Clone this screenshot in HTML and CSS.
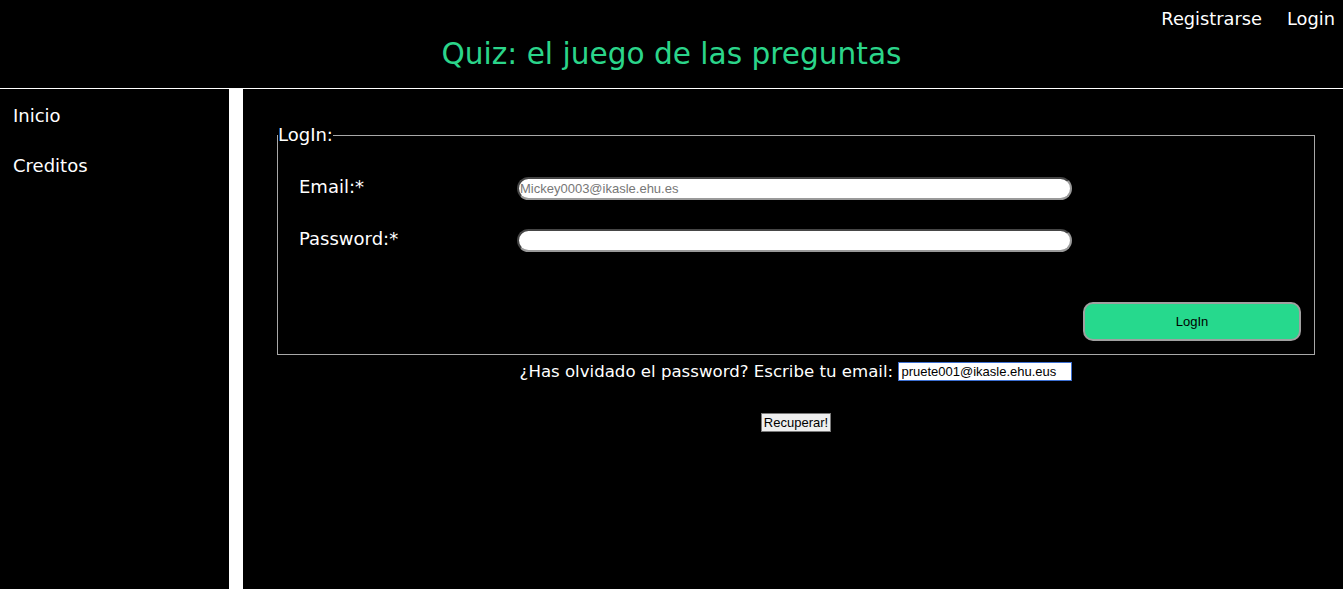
FILE: index.html
```html
<!DOCTYPE html>
<html lang="es">
<head>
<meta charset="utf-8">
<title>Quiz</title>
<link rel="stylesheet" href="styles.css">
</head>
<body>
<header class="top">
  <nav class="top-nav">
    <a class="top-link" href="#">Registrarse</a>
    <a class="top-link" href="#">Login</a>
  </nav>
  <h1 class="title">Quiz: el juego de las preguntas</h1>
</header>
<div class="layout">
  <aside class="side">
    <a class="side-link" href="#">Inicio</a>
    <a class="side-link" href="#">Creditos</a>
  </aside>
  <main class="main">
    <form class="login-form">
      <fieldset class="box">
        <legend class="box-legend">LogIn:</legend>
        <div class="rows">
          <label class="row-label" for="email">Email:*</label>
          <input class="row-input" id="email" type="text" placeholder="Mickey0003@ikasle.ehu.es">
          <label class="row-label" for="pass">Password:*</label>
          <input class="row-input" id="pass" type="password">
        </div>
        <div class="actions">
          <button class="login-btn" type="button">LogIn</button>
        </div>
      </fieldset>
    </form>
    <p class="forgot">¿Has olvidado el password? Escribe tu email: <input class="forgot-input" type="text" value="pruete001@ikasle.ehu.eus"></p>
    <div class="recover">
      <button class="recover-btn" type="button">Recuperar!</button>
    </div>
  </main>
</div>
</body>
</html>
```
FILE: styles.css
```css
html, body {
  margin: 0;
  padding: 0;
  background: #000;
  height: 100%;
}
body {
  font-family: "Comic Sans MS", "DejaVu Sans", sans-serif;
  color: #fff;
  overflow: hidden;
}
a {
  color: #fff;
  text-decoration: none;
}
.top {
  height: 88px;
  border-bottom: 1px solid #fff;
  box-sizing: content-box;
}
.top-nav {
  display: flex;
  justify-content: flex-end;
  gap: 25px;
  padding: 7px 8px 0 0;
  height: 24px;
}
.top-link {
  font-size: 17.8px;
  line-height: 24px;
}
.title {
  margin: 0;
  text-align: center;
  color: #2bd58a;
  font-weight: normal;
  font-size: 29.6px;
  line-height: 40px;
  padding-top: 3px;
}
.layout {
  display: flex;
  height: 500px;
}
.side {
  border-right: 14px solid #fff;
  display: flex;
  flex-direction: column;
  gap: 26px;
  padding: 15px 0 0 13px;
  box-sizing: border-box;
  flex: none;
  width: 243px;
}
.side-link {
  font-size: 18px;
  line-height: 24px;
}
.main {
  flex: 1;
  padding: 34px 28px 0 34px;
}
.login-form {
  margin: 0;
}
.box {
  margin: 0;
  border: 1px solid #a8a8a8;
  padding: 30px 13px 13px 21px;
}
.box-legend {
  padding: 0;
  font-size: 18px;
  line-height: 24px;
  margin-left: -21px;
}
.rows {
  display: grid;
  grid-template-columns: 219px 554px;
  row-gap: 29px;
  align-items: start;
}
.row-label {
  font-size: 18px;
  line-height: 20px;
}
.row-input {
  height: 23px;
  box-sizing: border-box;
  border: 2px inset #9a9a9a;
  border-radius: 12px;
  background: #fff;
  font-family: Arial, "Liberation Sans", sans-serif;
  font-size: 13px;
  padding: 0 1px;
  color: #333;
  outline: none;
  margin-left: -1px;
}
.row-input::placeholder {
  color: #777;
}
.actions {
  display: flex;
  justify-content: flex-end;
  margin-top: 50px;
}
.login-btn {
  width: 218px;
  height: 39px;
  background: #26d98d;
  border: 2px solid #a0a0a0;
  border-radius: 10px;
  font-family: Arial, "Liberation Sans", sans-serif;
  font-size: 13px;
  color: #000;
}
.forgot {
  margin: 0;
  padding-top: 6px;
  text-align: center;
  font-size: 16.6px;
  line-height: 22px;
}
.forgot-input {
  width: 174px;
  height: 19px;
  box-sizing: border-box;
  border: 1px solid #3c6fd2;
  padding: 0 2px;
  font-family: Arial, "Liberation Sans", sans-serif;
  font-size: 13px;
  color: #000;
  background: #fff;
  vertical-align: 1px;
  outline: none;
}
.recover {
  display: flex;
  justify-content: center;
  padding-top: 30px;
}
.recover-btn {
  height: 19px;
  padding: 0 2px;
  font-family: Arial, "Liberation Sans", sans-serif;
  font-size: 13px;
  color: #000;
  background: #efefef;
  border: 1px solid #7a7a7a;
  border-radius: 0;
}
```
